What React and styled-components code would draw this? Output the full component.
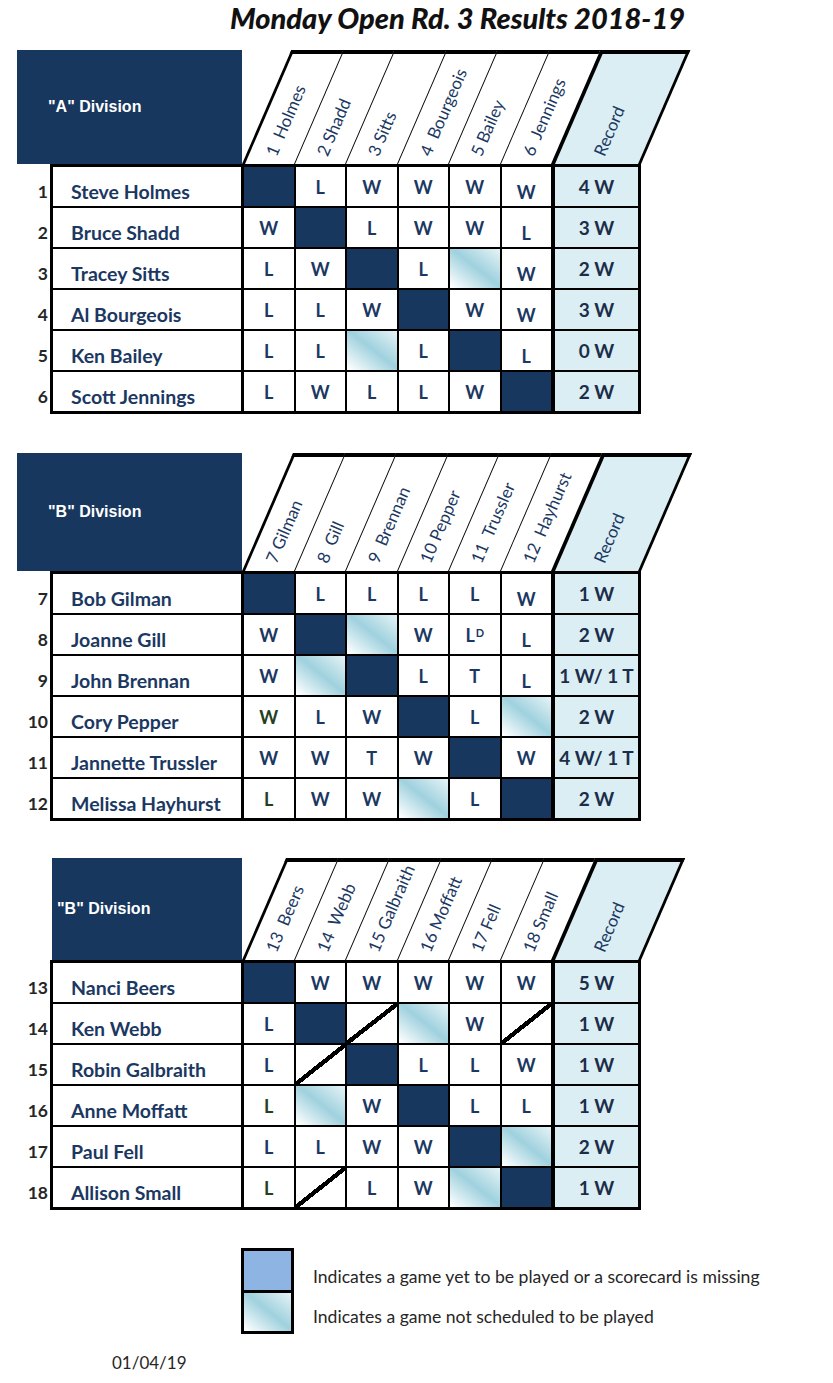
import React from 'react';
import styled, { createGlobalStyle } from 'styled-components';

const NAVY = '#17375e';
const INK = '#1b3862';

const GlobalStyle = createGlobalStyle`
  body {
    margin: 0;
    background: #fff;
    font-family: Lato, "Open Sans", sans-serif;
  }
`;

const Page = styled.div`
  width: 833px;
  min-height: 1383px;
  display: flex;
  flex-direction: column;
`;

const Title = styled.h1`
  margin: 0 0 14px 230px;
  height: 36px;
  line-height: 36px;
  font-size: 29px;
  font-weight: 900;
  font-style: italic;
  color: #111;
`;

const DivisionWrap = styled.section`
  display: flex;
  flex-direction: column;
  margin-bottom: ${p => p.$after}px;
`;

const HeaderRow = styled.div`
  display: flex;
  height: ${p => p.$h}px;
  padding-left: 17px;
`;

const LabelBlock = styled.div`
  box-sizing: border-box;
  width: ${p => p.$w}px;
  margin-left: ${p => 225 - p.$w}px;
  background: ${NAVY};
  color: #fff;
  display: flex;
  align-items: center;
  padding-left: ${p => p.$pad}px;
  font-family: "Liberation Sans", Arial, sans-serif;
  font-weight: 700;
  font-size: 16px;
`;

// the slanted column heads: one skewed strip, labels un-skewed inside
const HeaderStrip = styled.div`
  display: flex;
  height: 100%;
  transform: skewX(-23.4deg);
  transform-origin: 0 100%;
`;

const HeadCol = styled.div`
  box-sizing: border-box;
  width: ${p => p.$w}px;
  height: 100%;
  border-top: 4px solid #000;
  border-left: ${p => p.$edge}px solid #000;
  border-right: ${p => p.$right || 0}px solid #000;
  background: ${p => p.$fill || 'transparent'};
  display: flex;
  flex-direction: column;
  justify-content: flex-end;
  padding-bottom: 1px;
`;

const HeadLabel = styled.span`
  display: block;
  width: 0;
  margin-left: calc(50% - 2px);
  white-space: pre;
  line-height: 16px;
  font-size: 17px;
  color: ${INK};
  transform-origin: 0 50%;
  transform: skewX(23.4deg) rotate(-66.6deg);
`;

const BodyRow = styled.div`
  display: flex;
  padding-left: 17px;
`;

const Numbers = styled.div`
  box-sizing: border-box;
  width: 33px;
  padding: 3px 2px 0 0;
  display: flex;
  flex-direction: column;
  gap: 2px;
`;

const Num = styled.div`
  height: 39px;
  display: flex;
  align-items: flex-end;
  justify-content: flex-end;
  padding-bottom: 4px;
  box-sizing: border-box;
  font-weight: 700;
  font-size: 17.5px;
  color: #262626;
`;

const Grid = styled.div`
  display: grid;
  grid-template-columns: 189px repeat(6, 49.5px) 85px;
  grid-auto-rows: 39px;
  gap: 2px;
  background: #000;
  border: 3px solid #000;
`;

const NameCell = styled.div`
  box-sizing: border-box;
  background: #fff;
  border-right: 1px solid #000;
  display: flex;
  align-items: flex-end;
  padding: 0 0 3px 18px;
  font-weight: 700;
  font-size: 19.5px;
  color: ${INK};
  white-space: nowrap;
`;

const backgrounds = {
  dark: NAVY,
  fade: 'linear-gradient(to top right, #ffffff 2%, #9fd1de 52%, #e6f3f6 100%)',
  slash:
    'linear-gradient(to bottom right, #fff calc(50% - 2.2px), #000 calc(50% - 2.2px), #000 calc(50% + 2.2px), #fff calc(50% + 2.2px))',
  plain: '#fff',
};

const Cell = styled.div`
  background: ${p => backgrounds[p.$kind]};
  display: flex;
  align-items: center;
  justify-content: center;
  padding-top: ${p => (p.$low ? 11 : 0)}px;
  box-sizing: border-box;
  font-weight: 700;
  font-size: 18px;
  color: ${p => (p.$green ? '#24401f' : INK)};
`;

const Sup = styled.sup`
  font-size: 11px;
  font-weight: 700;
  margin-left: 1px;
  position: relative;
  top: -2px;
`;

const RecordCell = styled.div`
  box-sizing: border-box;
  background: #daeef3;
  border-left: 2px solid #000;
  display: flex;
  align-items: center;
  justify-content: center;
  font-weight: 700;
  font-size: 19px;
  color: #1c2d4a;
  white-space: pre;
`;

const Legend = styled.div`
  display: flex;
  gap: 19px;
  margin-left: 241px;
`;

const SwatchStack = styled.div`
  display: flex;
  flex-direction: column;
  gap: 3px;
  width: 47px;
  background: #000;
  border: 3px solid #000;
`;

const Swatch = styled.div`
  height: 38.5px;
  background: ${p => p.$fill};
`;

const LegendTexts = styled.div`
  display: flex;
  flex-direction: column;
  padding-top: 18px;
  gap: 19px;
`;

const LegendText = styled.div`
  font-size: 17.6px;
  line-height: 21px;
  color: #262626;
`;

const DateLine = styled.div`
  margin: 18px 0 0 112px;
  font-size: 17px;
  line-height: 21px;
  color: #262626;
`;

const nb = s => s.replace(/ /g, '\u00a0');

const divisions = [
  {
    label: '"A" Division',
    headH: 114,
    blockW: 225,
    pad: 31,
    after: 39,
    start: 1,
    heads: ['1  Holmes', '2 Shadd', '3 Sitts', '4  Bourgeois', '5 Bailey', '6  Jennings'],
    rows: [
      ['Steve Holmes', 'X L W W W W_', '4 W'],
      ['Bruce Shadd', 'W X L W W L_', '3 W'],
      ['Tracey Sitts', 'L W X L G W_', '2 W'],
      ['Al Bourgeois', 'L L W X W W_', '3 W'],
      ['Ken Bailey', 'L L G L X L_', '0 W'],
      ['Scott Jennings', 'L W L L W X', '2 W'],
    ],
  },
  {
    label: '"B" Division',
    headH: 118,
    blockW: 225,
    pad: 31,
    after: 37,
    start: 7,
    heads: ['7 Gilman', '8  Gill', '9  Brennan', '10 Pepper', '11  Trussler', '12  Hayhurst'],
    rows: [
      ['Bob Gilman', 'X L L L L W_', '1 W'],
      ['Joanne Gill', 'W X G W D L_', '2 W'],
      ['John Brennan', 'W G X L T L_', '1 W/ 1 T'],
      ['Cory Pepper', 'w L W X L G', '2 W'],
      ['Jannette Trussler', 'W W T W X W', '4 W/ 1 T'],
      ['Melissa Hayhurst', 'l W W G L X', '2 W'],
    ],
  },
  {
    label: '"B" Division',
    headH: 102,
    blockW: 190,
    pad: 5,
    after: 38,
    start: 13,
    heads: ['13  Beers', '14  Webb', '15 Galbraith', '16 Moffatt', '17 Fell', '18 Small'],
    rows: [
      ['Nanci Beers', 'X W W W W W', '5 W'],
      ['Ken Webb', 'L X / G W /', '1 W'],
      ['Robin Galbraith', 'L / X L L W', '1 W'],
      ['Anne Moffatt', 'l G W X L L', '1 W'],
      ['Paul Fell', 'L L W W X G', '2 W'],
      ['Allison Small', 'l / L W G X', '1 W'],
    ],
  },
];

const ResultCell = ({ code }) => {
  const low = code.endsWith('_');
  const c = low ? code.slice(0, -1) : code;
  if (c === 'X') return <Cell $kind="dark" />;
  if (c === 'G') return <Cell $kind="fade" />;
  if (c === '/') return <Cell $kind="slash" />;
  if (c === 'D')
    return (
      <Cell $kind="plain">
        L<Sup>D</Sup>
      </Cell>
    );
  const green = c === 'w' || c === 'l';
  return (
    <Cell $kind="plain" $low={low} $green={green}>
      {c.toUpperCase()}
    </Cell>
  );
};

const Division = ({ d }) => (
  <DivisionWrap $after={d.after}>
    <HeaderRow $h={d.headH}>
      <LabelBlock $w={d.blockW} $pad={d.pad}>{d.label}</LabelBlock>
      <HeaderStrip>
        {d.heads.map((h, i) => (
          <HeadCol key={h} $w={51.5} $edge={i === 0 ? 3 : 1.5}>
            <HeadLabel>{nb(h)}</HeadLabel>
          </HeadCol>
        ))}
        <HeadCol $w={90} $edge={4} $right={3} $fill="#daeef3">
          <HeadLabel>Record</HeadLabel>
        </HeadCol>
      </HeaderStrip>
    </HeaderRow>
    <BodyRow>
      <Numbers>
        {d.rows.map((r, i) => (
          <Num key={r[0]}>{d.start + i}</Num>
        ))}
      </Numbers>
      <Grid>
        {d.rows.map(([name, codes, rec]) => (
          <React.Fragment key={name}>
            <NameCell>{name}</NameCell>
            {codes.split(' ').map((c, j) => (
              <ResultCell key={j} code={c} />
            ))}
            <RecordCell>{rec}</RecordCell>
          </React.Fragment>
        ))}
      </Grid>
    </BodyRow>
  </DivisionWrap>
);

export default function App() {
  return (
    <>
      <GlobalStyle />
      <Page>
        <Title>Monday Open Rd. 3 Results 2018-19</Title>
        {divisions.map((d, i) => (
          <Division key={i} d={d} />
        ))}
        <Legend>
          <SwatchStack>
            <Swatch $fill="#8db4e2" />
            <Swatch $fill={backgrounds.fade} />
          </SwatchStack>
          <LegendTexts>
            <LegendText>Indicates a game yet to be played or a scorecard is missing</LegendText>
            <LegendText>Indicates a game not scheduled to be played</LegendText>
          </LegendTexts>
        </Legend>
        <DateLine>01/04/19</DateLine>
      </Page>
    </>
  );
}
